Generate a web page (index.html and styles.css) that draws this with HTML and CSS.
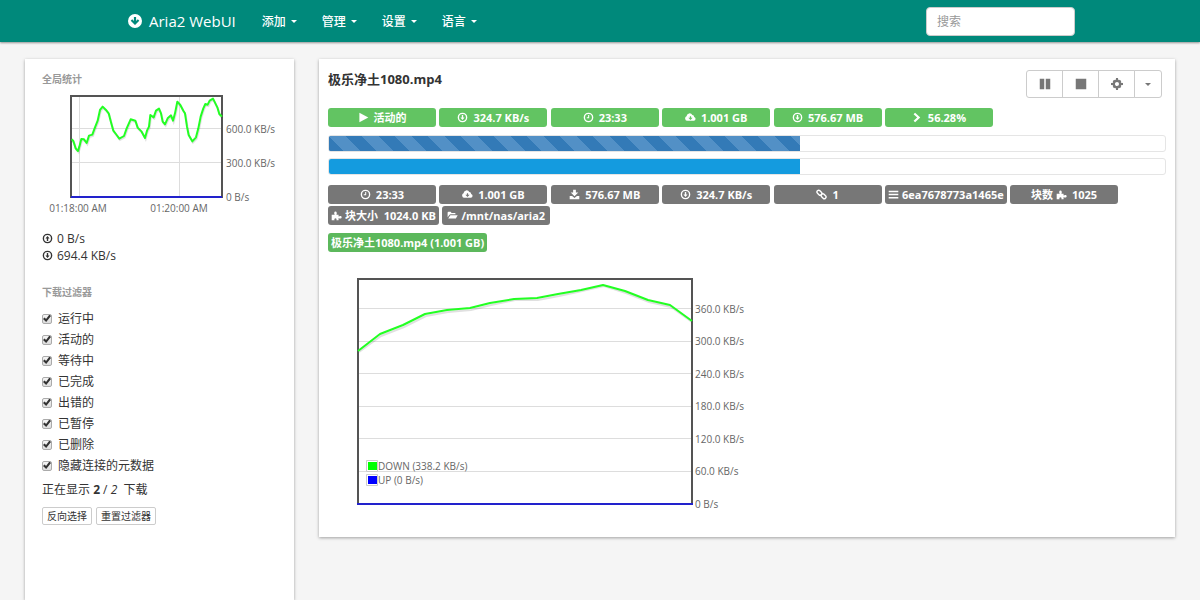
FILE: index.html
```html
<!DOCTYPE html>
<html lang="zh-CN">
<head>
<meta charset="utf-8">
<title>Aria2 WebUI</title>
<link rel="stylesheet" href="styles.css">
</head>
<body>
<svg class="sprite" aria-hidden="true">
  <symbol id="logo" viewBox="0 0 16 16"><path fill-rule="evenodd" d="M8 1a7 7 0 1 0 0 14A7 7 0 0 0 8 1zM6.9 4h2.2v3.9l1.7-1.7 1.5 1.5L8 12 3.7 7.7l1.5-1.5 1.7 1.7z"/></symbol>
  <symbol id="down" viewBox="0 0 16 16"><path fill-rule="evenodd" d="M8 1a7 7 0 1 0 0 14A7 7 0 0 0 8 1zm0 2a5 5 0 1 1 0 10A5 5 0 0 1 8 3z"/><path d="M7 4.5h2V8h2l-3 3.5L5 8h2z"/></symbol>
  <symbol id="up" viewBox="0 0 16 16"><path fill-rule="evenodd" d="M8 1a7 7 0 1 0 0 14A7 7 0 0 0 8 1zm0 2a5 5 0 1 1 0 10A5 5 0 0 1 8 3z"/><path d="M7 11.5h2V8h2L8 4.5 5 8h2z"/></symbol>
  <symbol id="clock" viewBox="0 0 16 16"><path fill-rule="evenodd" d="M8 1a7 7 0 1 0 0 14A7 7 0 0 0 8 1zm0 2a5 5 0 1 1 0 10A5 5 0 0 1 8 3z"/><path d="M7.5 4.5H9V9H5.500V7.500h2z"/></symbol>
  <symbol id="play" viewBox="0 0 16 16"><path d="M2 1l13 7-13 7z"/></symbol>
  <symbol id="cloud" viewBox="0 1 18 15"><path fill-rule="evenodd" d="M4 14a4 4 0 0 1-1.500-7.600A5 5 0 0 1 12 4.600a3 3 0 0 1 3 3A3.300 3.300 0 0 1 14.500 14zM8 6.500V9H5.500L9 12.500 12.500 9H10V6.500z"/></symbol>
  <symbol id="chevron" viewBox="0 0 16 16"><path d="M4.500 1L12 8l-7.500 7-2.200-2.200L7.500 8 2.300 3.200z"/></symbol>
  <symbol id="save" viewBox="0 0 16 16"><path d="M6 1h4v4h3.500L8 10.500 2.500 5H6z"/><path d="M1 10h3.500L8 13l3.500-3H15v5H1z"/></symbol>
  <symbol id="link" viewBox="0 0 16 16"><g fill="none" stroke="currentColor" stroke-width="2"><rect x="1" y="3" width="8" height="5" rx="2.500" transform="rotate(45 5 5.500)"/><rect x="7" y="8" width="8" height="5" rx="2.500" transform="rotate(45 11 10.500)"/></g></symbol>
  <symbol id="bars" viewBox="0 0 16 16"><path d="M1 2.500h14v2.200H1zM1 7h14v2.200H1zM1 11.500h14v2.200H1z"/></symbol>
  <symbol id="puzzle" viewBox="0 0 16 16"><path d="M1 7h4.500C4 5 4.500 2 6.500 2S9 5 7.800 7H11v2.500c2-1.500 4.500-1 4.500 1s-2.500 2.500-4.500 1V15H7.800c1-2-.3-3-1.300-3s-2.300 1-1.300 3H1z"/></symbol>
  <symbol id="folder" viewBox="0 0 18 16"><path d="M1 11V3.500Q1 2 2.500 2H6l1.500 2H13q1 0 1 2H6Q4.500 6 3.500 7.500z"/><path d="M5.500 7.500H17.500L14.500 13H2z"/></symbol>
  <symbol id="pause" viewBox="0 0 16 16"><path d="M1 1h6v14H1zM9 1h6v14H9z"/></symbol>
  <symbol id="stop" viewBox="0 0 16 16"><path d="M1 1h14v14H1z"/></symbol>
  <symbol id="gear" viewBox="0 0 16 16"><circle cx="8" cy="8" r="4.200" fill="none" stroke="currentColor" stroke-width="3"/><path d="M6.700 0h2.600l.5 3H6.200zM6.700 16h2.600l.5-3H6.200zM0 6.700v2.600l3 .5V6.200zM16 6.700v2.600l-3 .5V6.200zM2.300 4.200l1.900-1.900 2.300 1.700L4 6.500zM13.700 4.200l-1.900-1.900L9.500 4 12 6.500zM2.300 11.800l1.900 1.900L6.500 12 4 9.500zM13.700 11.800l-1.900 1.900L9.500 12 12 9.500z"/></symbol>
</svg>

<header class="navbar">
  <a class="brand" href="#"><svg class="brand-icon"><use href="#logo"/></svg>Aria2 WebUI</a>
  <nav class="nav">
    <a class="nav-link" href="#">添加<span class="caret"></span></a>
    <a class="nav-link" href="#">管理<span class="caret"></span></a>
    <a class="nav-link" href="#">设置<span class="caret"></span></a>
    <a class="nav-link" href="#">语言<span class="caret"></span></a>
  </nav>
  <input class="search" type="text" placeholder="搜索" aria-label="搜索">
</header>

<div class="layout">
  <aside class="panel sidebar">
    <h2 class="side-title">全局统计</h2>
    <svg class="mini-chart" viewBox="42 90 240 130" width="240" height="130" role="img" aria-label="全局统计">
      <path class="grid" d="M71 128.500h151M71 162.500h151M79.500 97v100M179.500 97v100"/>
      <rect class="frame" x="71" y="96" width="151" height="101"/>
      <g transform="translate(65 90) scale(.3333)">
        <path class="shadow thick" d="M20 152L27 157 34 179 41 187 45 174 51 151 59 152 67 163 74 141 84 138 92 116 100 96 107 64 115 54 125 64 133 74 140 101 147 126 157 139 165 150 179 142 187 119 199 92 213 96 220 117 232 129 242 148 248 126 254 114 258 79 268 86 275 66 284 60 290 74 295 99 302 107 310 89 320 80 326 96 332 74 339 39 348 49 357 66 362 74 368 114 373 139 384 158 395 146 402 119 409 84 417 59 423 46 430 48 436 36 446 30 452 42 459 56 465 76 471 84"/>
        <path class="down thick" d="M20 148L25 153 32 175 39 183 43 170 49 147 57 148 65 159 72 137 82 134 90 112 98 92 105 60 113 50 123 60 131 70 138 97 145 122 155 135 163 146 177 138 185 115 197 88 211 92 218 113 230 125 240 144 246 122 252 110 256 75 266 82 273 62 282 56 288 70 293 95 300 103 308 85 318 76 324 92 330 70 337 35 346 45 355 62 360 70 366 110 371 135 382 154 393 142 400 115 407 80 415 55 421 42 428 44 434 32 444 26 450 38 457 52 463 72 471 80"/>
      </g>
      <path class="up" d="M71 197h151"/>
      <g class="tick">
        <text x="226" y="133">600.0 KB/s</text><text x="226" y="167">300.0 KB/s</text><text x="226" y="201">0 B/s</text>
        <text x="78" y="212" text-anchor="middle">01:18:00 AM</text><text x="179" y="212" text-anchor="middle">01:20:00 AM</text>
      </g>
    </svg>
    <div class="speeds">
      <div class="speed"><svg class="speed-icon"><use href="#up"/></svg>0 B/s</div>
      <div class="speed"><svg class="speed-icon"><use href="#down"/></svg>694.4 KB/s</div>
    </div>
    <h2 class="side-title">下载过滤器</h2>
    <div class="filters">
      <label class="filter"><input class="check" type="checkbox" checked>运行中</label>
      <label class="filter"><input class="check" type="checkbox" checked>活动的</label>
      <label class="filter"><input class="check" type="checkbox" checked>等待中</label>
      <label class="filter"><input class="check" type="checkbox" checked>已完成</label>
      <label class="filter"><input class="check" type="checkbox" checked>出错的</label>
      <label class="filter"><input class="check" type="checkbox" checked>已暂停</label>
      <label class="filter"><input class="check" type="checkbox" checked>已删除</label>
      <label class="filter"><input class="check" type="checkbox" checked>隐藏连接的元数据</label>
    </div>
    <p class="showing">正在显示 <b>2</b> / <i>2</i>&nbsp; 下载</p>
    <div class="side-actions">
      <button class="btn-xs" type="button">反向选择</button>
      <button class="btn-xs" type="button">重置过滤器</button>
    </div>
  </aside>

  <main class="panel download">
    <div class="download-head">
      <h1 class="name">极乐净土1080.mp4</h1>
      <div class="btn-group">
        <button class="btn" type="button" aria-label="暂停"><svg class="btn-icon"><use href="#pause"/></svg></button>
        <button class="btn" type="button" aria-label="停止"><svg class="btn-icon"><use href="#stop"/></svg></button>
        <button class="btn" type="button" aria-label="设置"><svg class="btn-icon"><use href="#gear"/></svg></button>
        <button class="btn btn-narrow" type="button" aria-label="更多"><span class="caret"></span></button>
      </div>
    </div>
    <div class="labels">
      <span class="label active"><svg class="icon"><use href="#play"/></svg>活动的</span>
      <span class="label active"><svg class="icon"><use href="#down"/></svg>324.7 KB/s</span>
      <span class="label active"><svg class="icon"><use href="#clock"/></svg>23:33</span>
      <span class="label active"><svg class="icon"><use href="#cloud"/></svg>1.001 GB</span>
      <span class="label active"><svg class="icon"><use href="#down"/></svg>576.67 MB</span>
      <span class="label active"><svg class="icon"><use href="#chevron"/></svg>56.28%</span>
    </div>
    <div class="bars">
      <div class="track"><div class="bar striped" style="width:56.28%"></div></div>
      <div class="track"><div class="bar" style="width:56.28%"></div></div>
    </div>
    <div class="labels">
      <span class="label"><svg class="icon"><use href="#clock"/></svg>23:33</span>
      <span class="label"><svg class="icon"><use href="#cloud"/></svg>1.001 GB</span>
      <span class="label"><svg class="icon"><use href="#save"/></svg>576.67 MB</span>
      <span class="label"><svg class="icon"><use href="#down"/></svg>324.7 KB/s</span>
      <span class="label"><svg class="icon"><use href="#link"/></svg>1</span>
      <span class="label"><svg class="icon tight"><use href="#bars"/></svg>6ea7678773a1465e</span>
      <span class="label">块数&nbsp;<svg class="icon"><use href="#puzzle"/></svg>1025</span>
      <span class="label"><svg class="icon tight"><use href="#puzzle"/></svg>块大小&nbsp; 1024.0 KB</span>
      <span class="label"><svg class="icon tight"><use href="#folder"/></svg>/mnt/nas/aria2</span>
    </div>
    <div class="labels files">
      <span class="label file">极乐净土1080.mp4 (1.001 GB)</span>
    </div>
    <svg class="chart" viewBox="328 265 430 255" width="430" height="255" role="img" aria-label="下载速度">
      <path class="grid" d="M358 308.500h334M358 341.500h334M358 373.500h334M358 406.500h334M358 438.500h334M358 471.500h334"/>
      <rect class="frame" x="358" y="279" width="334" height="225"/>
      <path class="shadow" d="M359 352L381 336 404 327 426 316 448 312 471 310 491 305 515 300 538 300 559 296 582 291 604 286 626 293 649 302 671 307 692 322"/>
      <path class="down" d="M358 351L380 334 403 325 425 314 447 310 470 308 490 303 514 299 537 298 558 294 581 290 603 285 625 291 648 300 670 305 692 321"/>
      <path class="up" d="M357 504h336"/>
      <g class="tick">
        <text x="695" y="313">360.0 KB/s</text><text x="695" y="345">300.0 KB/s</text><text x="695" y="378">240.0 KB/s</text><text x="695" y="410">180.0 KB/s</text><text x="695" y="443">120.0 KB/s</text><text x="695" y="475">60.0 KB/s</text><text x="695" y="508">0 B/s</text>
        <text x="378" y="470">DOWN (338.2 KB/s)</text><text x="378" y="484">UP (0 B/s)</text>
      </g>
      <path class="key" d="M366.500 460.500h11v11h-11zM366.500 474.500h11v11h-11z"/>
      <rect x="368" y="462" width="9" height="8" fill="#0f0"/><rect x="368" y="476" width="9" height="8" fill="#00f"/>
    </svg>
  </main>
</div>
</body>
</html>
```
FILE: styles.css
```css
* { box-sizing: border-box; }
body {
  margin: 0;
  min-height: 100vh;
  display: flex;
  flex-direction: column;
  background: #f5f5f5;
  color: #333;
  font-family: "Open Sans", "Noto Sans CJK SC", sans-serif;
  font-size: 12px;
}
h1, h2, p { margin: 0; }
svg { fill: currentColor; }
button, input { font-family: inherit; }
.sprite { position: absolute; width: 0; height: 0; }

.navbar {
  display: flex;
  align-items: center;
  height: 42px;
  padding: 0 125px 0 127px;
  background: #00897b;
  color: #fff;
  box-shadow: 0 1px 2px rgba(0, 0, 0, .4);
}
.navbar a { color: inherit; text-decoration: none; }
.brand { display: flex; align-items: center; gap: 6px; font-size: 15px; font-weight: 500; }
.brand-icon { width: 16px; height: 16px; }
.nav { display: flex; gap: 24px; margin-left: 26px; }
.nav-link { display: flex; align-items: center; gap: 5px; font-weight: 500; }
.caret {
  display: inline-block;
  border: 4px solid transparent;
  border-top-color: currentColor;
  border-bottom: 0;
}
.nav-link .caret { border-width: 3px 3px 0; margin-right: 1px; }
.search {
  width: 149px;
  height: 29px;
  margin-left: auto;
  padding: 0 10px;
  border: 1px solid #ccc;
  border-radius: 4px;
  background: #fff;
  font-size: 12px;
}
.search::placeholder { color: #999; }

.layout {
  flex: 1;
  display: grid;
  grid-template-columns: 269px minmax(0, 1fr);
  align-items: start;
  gap: 25px;
  padding: 17px 25px 0;
}
.panel { background: #fff; box-shadow: 0 1px 3px rgba(0, 0, 0, .35); }

.sidebar { align-self: stretch; padding: 12px 12px 0 17px; }
.side-title { color: #999; font-size: 10px; line-height: 16px; font-weight: 700; }
.mini-chart { display: block; margin-top: 3px; }
.speeds { margin: 10px 0 20px; }
.speed { display: flex; align-items: center; gap: 4px; line-height: 17px; }
.speed-icon { width: 11px; height: 11px; }
.filters { display: flex; flex-direction: column; align-items: flex-start; margin-top: 8px; }
.filter { display: flex; align-items: center; gap: 6px; line-height: 21px; }
.check {
  appearance: none;
  display: grid;
  place-items: center;
  width: 10px;
  height: 10px;
  margin: 0;
  border: 1px solid #aaa;
  border-radius: 2px;
  background: linear-gradient(#f4f4f4, #ddd);
}
.check:checked::after {
  content: "";
  width: 8px;
  height: 8px;
  background: #333;
  clip-path: polygon(0 55%, 20% 38%, 38% 55%, 80% 0, 100% 18%, 40% 95%);
}
.showing { margin-top: 4px; line-height: 20px; }
.side-actions { display: flex; gap: 4px; margin-top: 7px; }
.btn-xs {
  height: 18px;
  padding: 0 4px;
  border: 1px solid #ccc;
  border-radius: 2px;
  background: #fff;
  color: #333;
  font-size: 10px;
  line-height: 14px;
}

.download { padding: 10px 9px 17px; }
.download-head { display: flex; justify-content: space-between; height: 38px; }
.name { font-size: 13px; line-height: 21px; font-weight: 700; }
.btn-group { display: flex; margin: 1px 4px 0 0; }
.btn {
  display: grid;
  place-items: center;
  width: 37px;
  height: 28px;
  margin: 0 0 0 -1px;
  padding: 0;
  border: 1px solid #ccc;
  background: #fff;
  color: #777;
}
.btn:first-child { border-radius: 3px 0 0 3px; }
.btn:last-child { border-radius: 0 3px 3px 0; }
.btn-narrow { width: 28px; }
.btn-narrow .caret { border-width: 3px 3px 0; }
.btn-icon { width: 12px; height: 12px; }

.labels { font-size: 13px; line-height: 21px; }
.label {
  display: inline-flex;
  align-items: center;
  justify-content: center;
  min-width: 108px;
  height: 19px;
  padding: 0 3px;
  border-radius: 3px;
  background: #777;
  color: #fff;
  font-size: 11px;
  line-height: 19px;
  font-weight: 700;
  white-space: nowrap;
  vertical-align: top;
  margin: 1px 0;
}
.label.active { background: #62c462; }
.label.file { background: #5cb85c; }
.icon { width: 11px; height: 11px; margin-right: 5px; }
.icon.tight { margin-right: 3px; }
.bars { display: flex; flex-direction: column; gap: 6px; margin: 7px 0 9px; }
.track { height: 17px; border: 1px solid #e5e5e5; border-radius: 3px; overflow: hidden; }
.bar { height: 100%; background: #149bdf; }
.striped {
  background: #337ab7 linear-gradient(45deg, #5290c6 25%, #337ab7 25%, #337ab7 50%, #5290c6 50%, #5290c6 75%, #337ab7 75%) 0 0 / 33px 33px;
}
.files { margin-top: 6px; }
.chart { display: block; margin-top: 11px; padding: 0; }

.grid { fill: none; stroke: #ddd; }
.frame { fill: none; stroke: #545454; stroke-width: 2; }
.down { fill: none; stroke: #2f2; stroke-width: 2; stroke-linejoin: round; }
.shadow { fill: none; stroke: rgba(0, 0, 0, .12); stroke-width: 2; }
.thick { stroke-width: 6; }
.up { fill: none; stroke: #22c; stroke-width: 2; }
.key { fill: #fff; stroke: #ccc; }
.tick { fill: #666; font-size: 10px; }
.chart { margin-top: 12px; }
```
